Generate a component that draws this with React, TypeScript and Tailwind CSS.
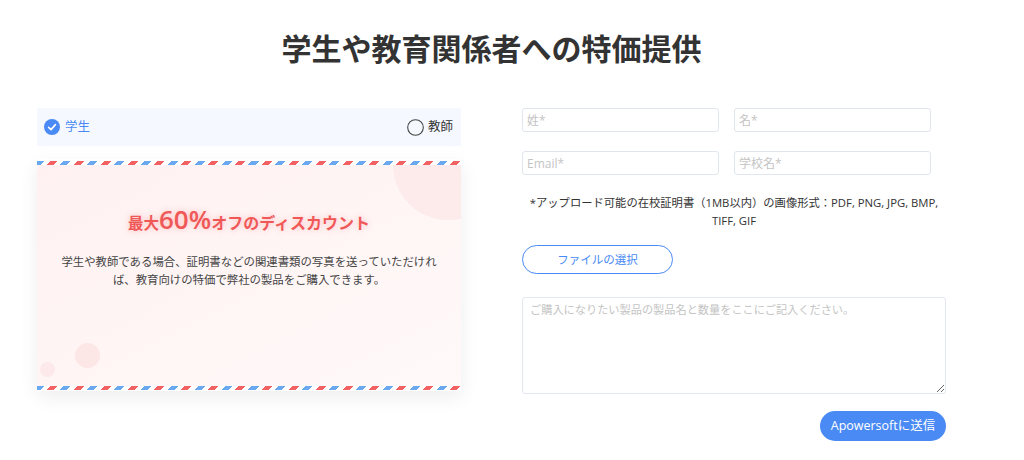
import React from "react";

const stripe =
  "h-[4px] bg-[repeating-linear-gradient(135deg,#6aa8f0_0px,#6aa8f0_5px,transparent_5px,transparent_9.5px,#f26262_9.5px,#f26262_14.5px,transparent_14.5px,transparent_19px)]";

function CheckedIcon() {
  return (
    <svg width="16" height="16" viewBox="0 0 16 16">
      <circle cx="8" cy="8" r="8" fill="#4a8af4" />
      <path d="M4.6 8.3 L7 10.6 L11.4 5.6" fill="none" stroke="#fff" strokeWidth="1.6" strokeLinecap="round" strokeLinejoin="round" />
    </svg>
  );
}

function UncheckedIcon() {
  return (
    <svg width="17" height="17" viewBox="0 0 17 17">
      <circle cx="8.5" cy="8.5" r="7.8" fill="none" stroke="#444" strokeWidth="1.1" />
    </svg>
  );
}

export default function App() {
  return (
    <div className="min-h-[460px] w-full bg-white font-['Open_Sans','Noto_Sans_CJK_JP',sans-serif] text-[#333]">
      <div className="ml-[37px] w-[909px] pt-[27px]">
        <h1 className="text-center text-[30px] font-bold leading-[40px] text-[#333] font-['Noto_Sans_CJK_JP',sans-serif]">
          学生や教育関係者への特価提供
        </h1>

        <div className="mt-[41px] flex justify-between">
          {/* Left column */}
          <div className="w-[424px]">
            <div className="flex h-[38px] items-center justify-between bg-[#f5f9ff] pl-[7px] pr-[8px]">
              <div className="flex items-center gap-[5px]">
                <CheckedIcon />
                <span className="text-[12.5px] text-[#4a8af4]">学生</span>
              </div>
              <div className="flex items-center gap-[4px]">
                <UncheckedIcon />
                <span className="text-[12.5px] text-[#333]">教師</span>
              </div>
            </div>

            <div className="mt-[13px] bg-white pt-[2px] pb-[1px] shadow-[0_6px_18px_rgba(0,0,0,0.07)]">
              <div className={stripe} />
              <div className="relative h-[221px] overflow-hidden bg-gradient-to-br from-[#fff1f1] to-[#fff9f9]">
                <div className="absolute right-[-42px] top-[-55px] h-[110px] w-[110px] rounded-full bg-[#fde8e8] opacity-80" />
                <div className="absolute left-[38px] top-[178px] h-[25px] w-[25px] rounded-full bg-[#fde6e6]" />
                <div className="absolute left-[3px] top-[197px] h-[15px] w-[15px] rounded-full bg-[#fde9e9]" />
                <div className="relative pt-[39px] text-center">
                  <div className="flex items-baseline justify-center font-bold leading-[30px] text-[#f05858] [text-shadow:0_0_6px_rgba(240,88,88,0.35)]">
                    <span className="text-[15.5px]">最大</span>
                    <span className="text-[26px] font-semibold font-['Open_Sans',sans-serif]">60%</span>
                    <span className="text-[16px]">オフのディスカウント</span>
                  </div>
                  <p className="mx-auto mt-[15px] w-[380px] text-[11.4px] leading-[18px] text-[#444]">
                    学生や教師である場合、証明書などの関連書類の写真を送っていただければ、教育向けの特価で弊社の製品をご購入できます。
                  </p>
                </div>
              </div>
              <div className={stripe} />
            </div>
          </div>

          {/* Right column */}
          <div className="w-[424px]">
            <div className="flex gap-[15px]">
              <input
                placeholder="姓*"
                className="h-[24px] w-[197px] rounded-[3px] border border-[#e1e6ee] px-[4px] text-[12px] outline-none placeholder:text-[#c4c4c4]"
              />
              <input
                placeholder="名*"
                className="h-[24px] w-[197px] rounded-[3px] border border-[#e1e6ee] px-[4px] text-[12px] outline-none placeholder:text-[#c4c4c4]"
              />
            </div>
            <div className="mt-[19px] flex gap-[15px]">
              <input
                placeholder="Email*"
                className="h-[24px] w-[197px] rounded-[3px] border border-[#e1e6ee] px-[4px] text-[12px] outline-none placeholder:text-[#c4c4c4]"
              />
              <input
                placeholder="学校名*"
                className="h-[24px] w-[197px] rounded-[3px] border border-[#e1e6ee] px-[4px] text-[12px] outline-none placeholder:text-[#c4c4c4]"
              />
            </div>
            <p className="mt-[19px] whitespace-nowrap text-center text-[11.3px] leading-[18px] text-[#333]">
              *アップロード可能の在校証明書（1MB以内）の画像形式：PDF, PNG, JPG, BMP,
              <br />
              TIFF, GIF
            </p>
            <button className="mt-[15px] flex h-[29px] w-[151px] items-center justify-center rounded-full border border-[#4a8af4] text-[11.5px] text-[#4a8af4]">
              ファイルの選択
            </button>
            <textarea
              placeholder="ご購入になりたい製品の製品名と数量をここにご記入ください。"
              className="mt-[23px] block h-[97px] w-[424px] rounded-[3px] border border-[#e3e7ee] px-[7px] py-[2px] text-[11.2px] leading-[20px] outline-none placeholder:text-[#c4c4c4]"
            />
            <div className="mt-[17px] flex justify-end">
              <button className="h-[30px] w-[126px] rounded-full bg-[#4a8af4] text-[12.5px] text-white">
                Apowersoftに送信
              </button>
            </div>
          </div>
        </div>
      </div>
    </div>
  );
}
